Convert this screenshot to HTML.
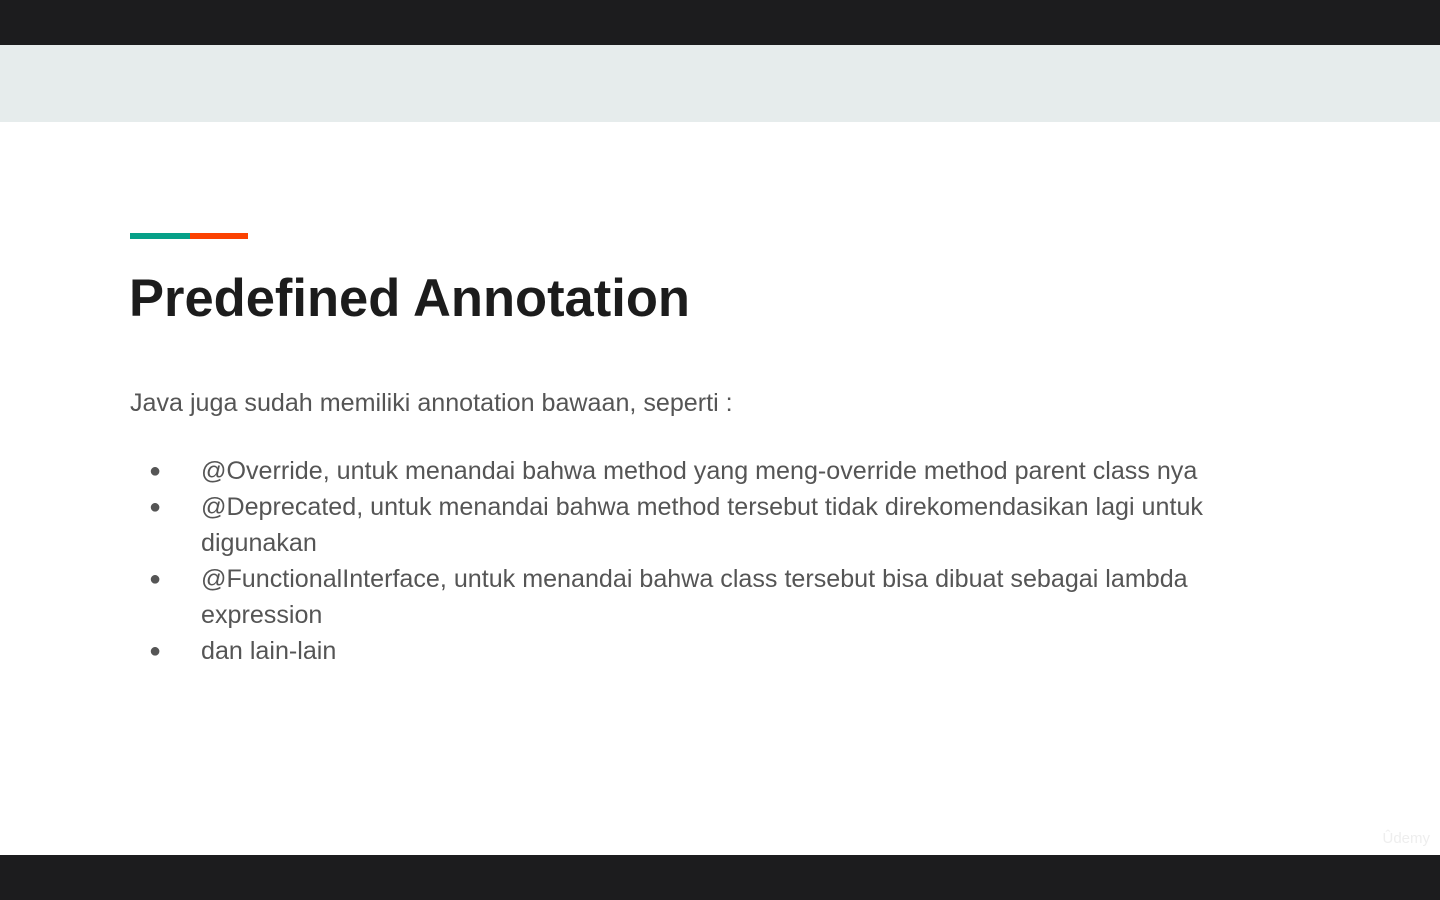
<!DOCTYPE html>
<html><head><style>
body{margin:0;width:1440px;height:900px;background:#1c1c1e;position:relative;overflow:hidden;font-family:"Liberation Sans",sans-serif}
.slide{position:absolute;left:0;top:45px;width:1440px;height:810px;background:#fff}
.band{position:absolute;left:0;top:0;width:1440px;height:77px;background:#e6ecec}
.bar1{position:absolute;left:130px;top:188px;width:60px;height:6px;background:#06a088}
.bar2{position:absolute;left:190px;top:188px;width:58px;height:6px;background:#fb4202}
h1{position:absolute;left:129px;top:223px;margin:0;font-size:52.5px;font-weight:bold;color:#1c1c1c;white-space:nowrap}
.t{position:absolute;color:#555;font-size:25.1px;white-space:nowrap;line-height:36px}
.b{position:absolute;left:149px;color:#555;font-size:20px;line-height:36px}
.u{position:absolute;right:10px;bottom:8px;color:#eee;font-size:15px}
</style></head><body>
<div class="slide">
<div class="band"></div>
<div class="bar1"></div><div class="bar2"></div>
<h1>Predefined Annotation</h1>
<div class="t" style="left:130px;top:340px">Java juga sudah memiliki annotation bawaan, seperti :</div>
<div class="b" style="top:408px">●</div>
<div class="t" style="left:201px;top:408px">@Override, untuk menandai bahwa method yang meng-override method parent class nya</div>
<div class="b" style="top:444px">●</div>
<div class="t" style="left:201px;top:444px">@Deprecated, untuk menandai bahwa method tersebut tidak direkomendasikan lagi untuk</div>
<div class="t" style="left:201px;top:480px">digunakan</div>
<div class="b" style="top:516px">●</div>
<div class="t" style="left:201px;top:516px">@FunctionalInterface, untuk menandai bahwa class tersebut bisa dibuat sebagai lambda</div>
<div class="t" style="left:201px;top:552px">expression</div>
<div class="b" style="top:588px">●</div>
<div class="t" style="left:201px;top:588px">dan lain-lain</div>
<div class="u">Ûdemy</div>
</div>
</body></html>
